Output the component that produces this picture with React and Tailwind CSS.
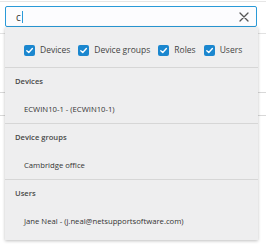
import React from "react";

const CheckIcon = () => (
  <span className="flex h-[11px] w-[11px] items-center justify-center rounded-[2px] bg-[#1b87cf]">
    <svg width="9" height="9" viewBox="0 0 10 10" fill="none">
      <path d="M2 5.2 L4.2 7.3 L8.2 2.8" stroke="white" strokeWidth="1.5" strokeLinecap="round" strokeLinejoin="round" />
    </svg>
  </span>
);

const filters = ["Devices", "Device groups", "Roles", "Users"];

const sections = [
  { title: "Devices", item: "ECWIN10-1 - (ECWIN10-1)" },
  { title: "Device groups", item: "Cambridge office" },
  { title: "Users", item: "Jane Neal - (j.neal@netsupportsoftware.com)" },
];

const App = () => {
  return (
    <div className="relative h-[245px] w-[266px] overflow-hidden bg-white font-['Open_Sans',sans-serif]">
      {/* background table rows behind the dropdown */}
      <div className="border-t border-[#e6e6e6] mt-[1px]" />
      <div className="mt-[31px] border-t border-[#e2e2e2]" />
      <div className="mt-[58px] border-t border-[#d8d8d8]" />
      <div className="mt-[22px] border-t border-[#d8d8d8]" />

      <div className="absolute left-[5px] top-[6px] w-[252px]">
        <div className="flex h-[21px] items-center rounded-[2px] border border-[#2a9ad8] bg-[#fcfcfe] pl-[10px] pr-[7px]">
          <span className="text-[10px] leading-none text-[#333]">c</span>
          <span className="ml-[1px] h-[12px] w-px bg-[#2a9ad8]" />
          <svg className="ml-auto" width="10" height="10" viewBox="0 0 10 10">
            <path d="M1 1 L9 9 M9 1 L1 9" stroke="#555" strokeWidth="1.3" strokeLinecap="round" />
          </svg>
        </div>

        <div className="w-[253px] bg-[#eeeeef] shadow-[0_1px_3px_rgba(0,0,0,0.25)]">
          <div className="flex items-center gap-[5px] pl-[19px] pt-[15px] pb-[9px] text-[8.5px] leading-[16px] text-[#444]">
            {filters.map((f) => (
              <label key={f} className="mr-[3px] flex items-center gap-[5px]">
                <CheckIcon />
                <span>{f}</span>
              </label>
            ))}
          </div>
          {sections.map((s) => (
            <div key={s.title} className="border-t border-[#d6d6d6]">
              <div className="flex h-[28px] items-center pl-[10px] text-[7.6px] font-semibold text-[#484848]">
                {s.title}
              </div>
              <div className="flex h-[27px] items-center pl-[19px] text-[7.7px] text-[#333]">
                {s.item}
              </div>
            </div>
          ))}
          <div className="h-[5px]" />
        </div>
      </div>
    </div>
  );
};

export default App;
